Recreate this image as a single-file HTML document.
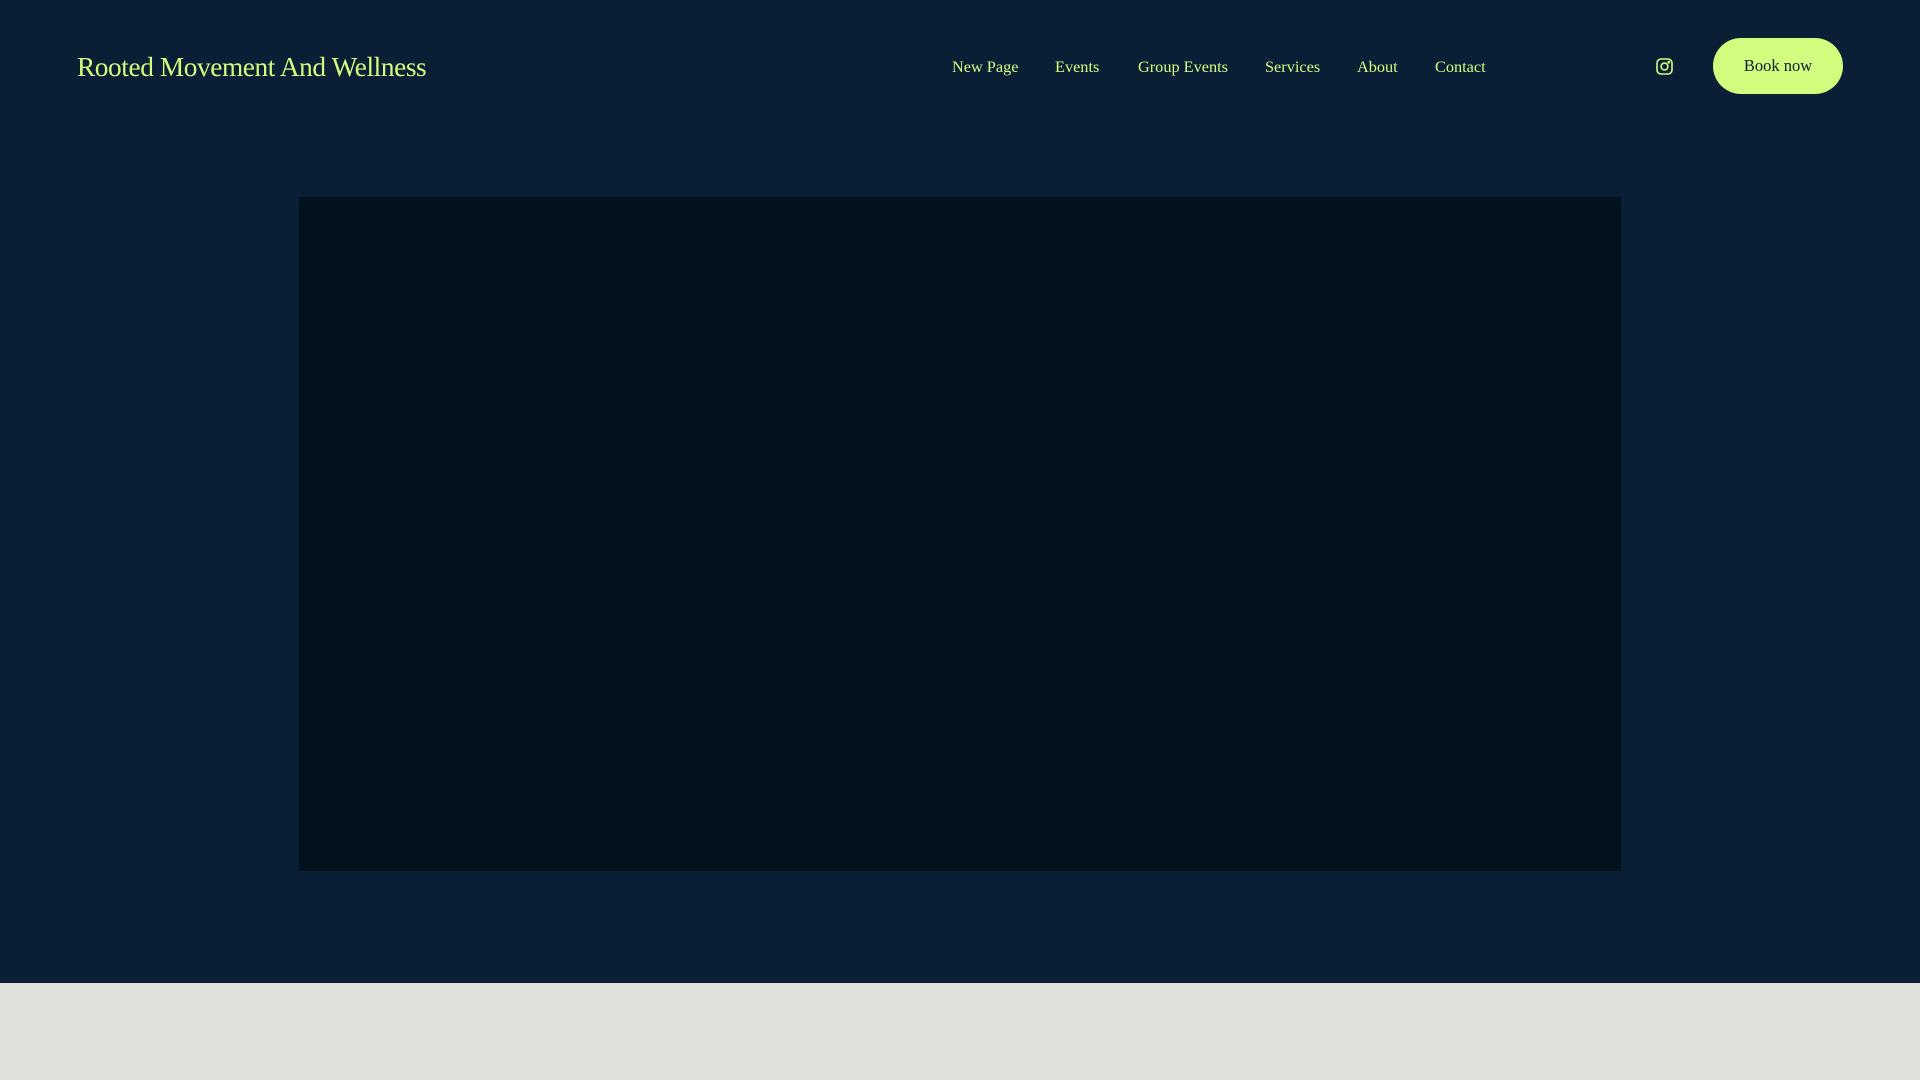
<!DOCTYPE html>
<html><head><meta charset="utf-8"><style>
html,body{margin:0;padding:0;width:1920px;height:1080px;overflow:hidden;background:#e0dfdb;font-family:"Liberation Serif",serif}
.top{position:absolute;left:0;top:0;width:1920px;height:983px;background:#0a1f35}
.title{position:absolute;left:77px;top:52px;font-size:27.3px;color:#d3fc7f;letter-spacing:-0.4px;white-space:nowrap}
.nav a{position:absolute;top:57px;font-size:16.3px;color:#d3fc7f;text-decoration:none;white-space:nowrap}
.btn{position:absolute;left:1713px;top:38px;width:130px;height:56px;border-radius:28px;background:#d3fc7f;color:#0a1f35;font-size:16.5px;text-align:center;line-height:56px}
.video{position:absolute;left:299px;top:197px;width:1322px;height:674px;background:#02111b}
svg{position:absolute}
</style></head><body>
<div class="top">
<div class="title">Rooted Movement And Wellness</div>
<div class="nav">
<a style="left:952px">New Page</a>
<a style="left:1055px">Events</a>
<a style="left:1138px">Group Events</a>
<a style="left:1265px">Services</a>
<a style="left:1357px">About</a>
<a style="left:1435px">Contact</a>
</div>
<svg style="left:1656px;top:58px" width="17" height="17" viewBox="0 0 17 17" fill="none" stroke="#d3fc7f" stroke-width="1.6"><rect x="1" y="1" width="15" height="15" rx="4"/><circle cx="8.5" cy="8.5" r="3.4"/><circle cx="12.8" cy="4.2" r="0.6" fill="#d3fc7f"/></svg>
<div class="btn">Book now</div>
<div class="video"></div>
</div>
</body></html>
